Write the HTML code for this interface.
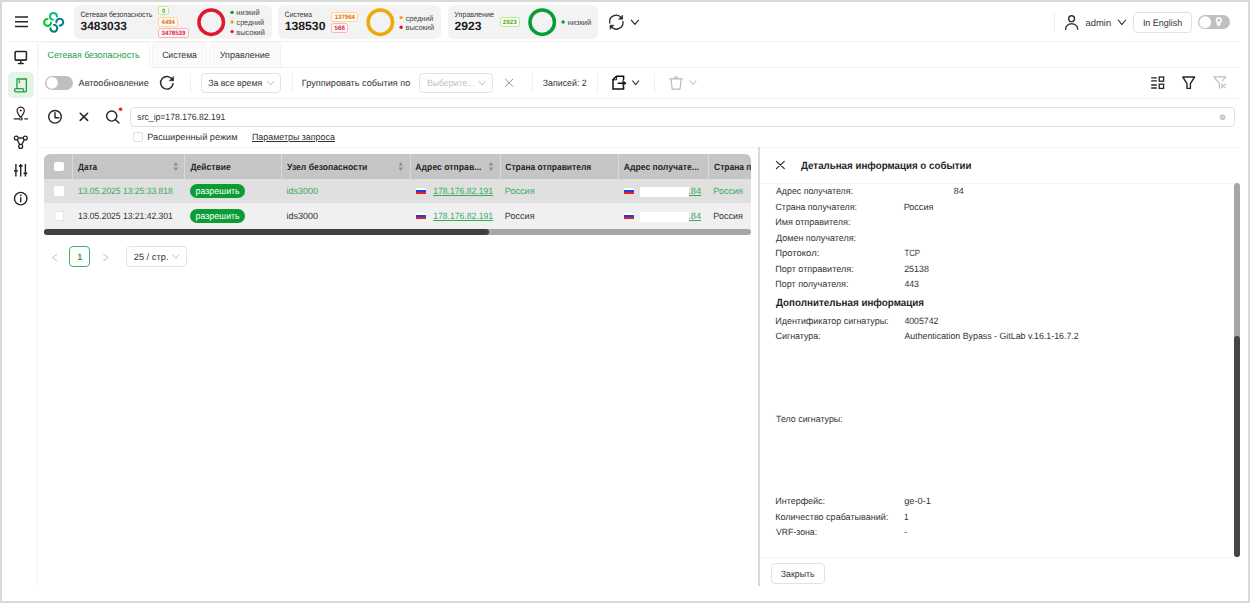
<!DOCTYPE html><html lang="ru"><head><meta charset="utf-8"><title>Сетевая безопасность</title><style>
*{box-sizing:border-box;margin:0;padding:0}
html,body{width:1250px;height:603px;overflow:hidden;background:#fff}
body{font-family:"Liberation Sans",sans-serif}
#app{position:absolute;left:0;top:0;width:1250px;height:603px;background:#fff;overflow:hidden}
#app>*{position:absolute}
header,nav,section,aside{left:0;top:0;width:0;height:0}
.t{position:absolute;left:0;top:0;white-space:nowrap;line-height:14px;height:14px;transform-origin:0 0;text-rendering:geometricPrecision}
.b{position:absolute}
.hl{position:absolute;height:1px;background:#f0f0f0}
.vl{position:absolute;width:1px;background:#f2f2f2}
.card{position:absolute;background:#f3f3f3;border-radius:6px}
.bd{position:absolute;border:1px solid;border-radius:2.5px}
.bd.g{border-color:#b7eb8f;background:#fbfff7}
.bd.o{border-color:#ffd591;background:#fffbf2}
.bd.r{border-color:#ffb3b0;background:#fff8f8}
.sel{position:absolute;border:1px solid #e2e2e2;border-radius:4px;background:#fff}
.tab{position:absolute;border:1px solid #f3f3f3;border-bottom:none;border-radius:5px 5px 0 0;background:#fafafa}
.tab.a{background:#fff}
.cb{position:absolute;border:1px solid #e0e0e0;border-radius:2px;background:#fff}
svg{position:absolute;overflow:visible}

</style></head><body><div id="app">
<header>
<div class="card" style="left:73.6px;top:5px;width:198.00px;height:34.00px;"></div>
<div class="card" style="left:278px;top:5px;width:163.40px;height:34.00px;"></div>
<div class="card" style="left:448px;top:5px;width:150.40px;height:34.00px;"></div>
<span class="t" style="font-size:7.8px;font-weight:400;color:#333;transform:translate(80.38px,8.10px) scaleX(0.8842);">Сетевая безопасность</span>
<span class="t" style="font-size:11.9px;font-weight:700;color:#1a1a1a;transform:translate(80.55px,19.40px) scaleX(1.0011);">3483033</span>
<div class="bd g" style="left:158.2px;top:6.4px;width:10.60px;height:9.00px;"></div>
<span class="t" style="font-size:6.3px;font-weight:700;color:#52a81c;transform:translate(161.97px,5.00px) scaleX(0.9333);">0</span>
<div class="bd o" style="left:158.2px;top:17.4px;width:20.00px;height:9.40px;"></div>
<span class="t" style="font-size:6.3px;font-weight:700;color:#d4760f;transform:translate(161.60px,16.00px) scaleX(0.9429);">4494</span>
<div class="bd r" style="left:158.2px;top:28.4px;width:30.60px;height:9.40px;"></div>
<span class="t" style="font-size:6.3px;font-weight:700;color:#d9263a;transform:translate(161.60px,27.00px) scaleX(0.9714);">3478539</span>
<span class="t" style="font-size:7.8px;font-weight:400;color:#444;transform:translate(236.32px,6.30px) scaleX(0.9617);">низкий</span>
<span class="t" style="font-size:7.8px;font-weight:400;color:#444;transform:translate(236.57px,15.90px) scaleX(0.9162);">средний</span>
<span class="t" style="font-size:7.8px;font-weight:400;color:#444;transform:translate(236.33px,25.50px) scaleX(0.9436);">высокий</span>
<span class="t" style="font-size:7.8px;font-weight:400;color:#333;transform:translate(284.78px,8.10px) scaleX(0.8640);">Система</span>
<span class="t" style="font-size:11.9px;font-weight:700;color:#1a1a1a;transform:translate(284.63px,19.40px) scaleX(1.0286);">138530</span>
<div class="bd o" style="left:331.4px;top:12px;width:26.40px;height:9.60px;"></div>
<span class="t" style="font-size:6.3px;font-weight:700;color:#d4760f;transform:translate(334.76px,11.00px) scaleX(0.9542);">137964</span>
<div class="bd r" style="left:331.4px;top:23px;width:16.80px;height:9.60px;"></div>
<span class="t" style="font-size:6.3px;font-weight:700;color:#d9263a;transform:translate(334.55px,22.00px) scaleX(0.9951);">566</span>
<span class="t" style="font-size:7.8px;font-weight:400;color:#444;transform:translate(405.77px,11.50px) scaleX(0.9162);">средний</span>
<span class="t" style="font-size:7.8px;font-weight:400;color:#444;transform:translate(405.53px,21.10px) scaleX(0.9436);">высокий</span>
<span class="t" style="font-size:7.8px;font-weight:400;color:#333;transform:translate(454.37px,8.10px) scaleX(0.9123);">Управление</span>
<span class="t" style="font-size:11.9px;font-weight:700;color:#1a1a1a;transform:translate(454.55px,19.40px) scaleX(1.0175);">2923</span>
<div class="bd g" style="left:499.6px;top:17.3px;width:20.40px;height:9.50px;"></div>
<span class="t" style="font-size:6.3px;font-weight:700;color:#52a81c;transform:translate(502.75px,16.00px) scaleX(0.9891);">2923</span>
<span class="t" style="font-size:7.8px;font-weight:400;color:#444;transform:translate(567.51px,15.90px) scaleX(0.9787);">низкий</span>
<div class="vl" style="left:1054px;top:12px;height:20px;background:#f0f0f0"></div>
<span class="t" style="font-size:9.3px;font-weight:400;color:#333;transform:translate(1085.55px,16.10px) scaleX(1.0122);">admin</span>
<div class="sel" style="left:1133.4px;top:12px;width:58.60px;height:20.60px;"></div>
<span class="t" style="font-size:9.3px;font-weight:400;color:#333;transform:translate(1142.88px,16.00px) scaleX(0.9620);">In English</span>
<div class="b" style="left:1198.2px;top:15px;width:31.80px;height:14.40px;background:#c0c0c0;border-radius:8px"></div>
</header>
<div class="hl" style="left:7px;top:41px;width:1233px;background:#f0f0f0"></div>
<nav>
<div class="b" style="left:8.2px;top:72.3px;width:26.10px;height:25.90px;background:#e4f5e8;border-radius:5px"></div>
<div class="vl" style="left:37px;top:42px;height:544px;background:#f5f5f5"></div>
</nav>
<div class="tab a" style="left:38px;top:42.4px;width:112.00px;height:25.60px;"></div>
<div class="tab" style="left:152px;top:42.4px;width:55.00px;height:24.60px;"></div>
<div class="tab" style="left:209px;top:42.4px;width:71.60px;height:24.60px;"></div>
<div class="hl" style="left:150px;top:67px;width:1090px;background:#f0f0f0"></div>
<span class="t" style="font-size:9.1px;font-weight:400;color:#1f9d45;transform:translate(47.51px,48.00px) scaleX(0.9723);">Сетевая безопасность</span>
<span class="t" style="font-size:9.1px;font-weight:400;color:#333;transform:translate(162.13px,48.00px) scaleX(0.9490);">Система</span>
<span class="t" style="font-size:9.1px;font-weight:400;color:#333;transform:translate(219.75px,48.00px) scaleX(0.9900);">Управление</span>
<div class="b" style="left:45.1px;top:75.9px;width:28.20px;height:13.90px;background:#bfbfbf;border-radius:7px"></div>
<span class="t" style="font-size:9.1px;font-weight:400;color:#333;transform:translate(78.60px,76.00px) scaleX(0.9971);">Автообновление</span>
<div class="vl" style="left:190px;top:73px;height:20px;background:#f0f0f0"></div>
<div class="sel" style="left:201px;top:72.5px;width:80.40px;height:20.40px;"></div>
<span class="t" style="font-size:9.1px;font-weight:400;color:#333;transform:translate(208.16px,76.00px) scaleX(0.9629);">За все время</span>
<div class="vl" style="left:292px;top:73px;height:20px;background:#f0f0f0"></div>
<span class="t" style="font-size:9.1px;font-weight:400;color:#333;transform:translate(301.85px,76.00px) scaleX(1.0037);">Группировать события по</span>
<div class="sel" style="left:419.4px;top:72.5px;width:73.20px;height:20.70px;"></div>
<span class="t" style="font-size:9.1px;font-weight:400;color:#bfbfbf;transform:translate(426.88px,76.00px) scaleX(0.9583);">Выберите...</span>
<div class="vl" style="left:532px;top:73px;height:20px;background:#f0f0f0"></div>
<span class="t" style="font-size:9.1px;font-weight:400;color:#333;transform:translate(542.76px,76.00px) scaleX(0.9698);">Записей: 2</span>
<div class="vl" style="left:596.6px;top:73px;height:20px;background:#f0f0f0"></div>
<div class="vl" style="left:653.6px;top:73px;height:20px;background:#f0f0f0"></div>
<div class="hl" style="left:38px;top:98px;width:1202px;background:#f0f0f0"></div>
<div class="sel" style="left:130px;top:107px;width:1105.00px;height:20.40px;"></div>
<span class="t" style="font-size:9.1px;font-weight:400;color:#333;transform:translate(137.36px,110.00px) scaleX(0.9474);">src_ip=178.176.82.191</span>
<div class="cb" style="left:133px;top:132px;width:10.00px;height:10.00px;"></div>
<span class="t" style="font-size:9.1px;font-weight:400;color:#333;transform:translate(147.24px,130.00px) scaleX(1.0085);">Расширенный режим</span>
<span class="t" style="font-size:9.1px;font-weight:400;color:#333;transform:translate(251.97px,130.00px) scaleX(0.9769);text-decoration:underline">Параметры запроса</span>
<div class="hl" style="left:38px;top:146.6px;width:1202px;background:#f5f5f5"></div>
<section>
<div class="b" style="left:44.4px;top:154px;width:706.60px;height:24.70px;background:#c5c5c5;border-radius:6px 6px 0 0"></div>
<div class="b" style="left:44.4px;top:178.7px;width:706.60px;height:24.30px;background:#e0e0e0"></div>
<div class="b" style="left:44.4px;top:203px;width:706.60px;height:25.80px;background:#f0f0f0"></div>
<div class="b" style="left:44.4px;top:228.8px;width:706.60px;height:6.40px;background:#a6a6a6;border-radius:3.2px"></div>
<div class="b" style="left:44.4px;top:228.8px;width:445.00px;height:6.40px;background:#404040;border-radius:3.2px"></div>
<div class="vl" style="left:72px;top:154px;height:24.69999999999999px;background:#d9d9d9"></div>
<div class="vl" style="left:184.4px;top:154px;height:24.69999999999999px;background:#d9d9d9"></div>
<div class="vl" style="left:281.4px;top:154px;height:24.69999999999999px;background:#d9d9d9"></div>
<div class="vl" style="left:410px;top:154px;height:24.69999999999999px;background:#d9d9d9"></div>
<div class="vl" style="left:500px;top:154px;height:24.69999999999999px;background:#d9d9d9"></div>
<div class="vl" style="left:618.4px;top:154px;height:24.69999999999999px;background:#d9d9d9"></div>
<div class="vl" style="left:708.4px;top:154px;height:24.69999999999999px;background:#d9d9d9"></div>
<div class="b" style="left:53.6px;top:161.6px;width:10.40px;height:9.80px;background:#fff;border-radius:2px"></div>
<div class="b" style="left:54px;top:186px;width:9.60px;height:9.60px;background:#fff;border-radius:2px"></div>
<div class="b" style="left:54px;top:211px;width:9.60px;height:9.60px;background:#fff;border-radius:2px;border:1px solid #e6e6e6"></div>
<span class="t" style="font-size:9.1px;font-weight:700;color:#262626;transform:translate(78.00px,159.90px) scaleX(0.9129);">Дата</span>
<span class="t" style="font-size:9.1px;font-weight:700;color:#262626;transform:translate(190.40px,159.90px) scaleX(0.9357);">Действие</span>
<span class="t" style="font-size:9.1px;font-weight:700;color:#262626;transform:translate(287.00px,159.90px) scaleX(0.9440);">Узел безопасности</span>
<span class="t" style="font-size:9.1px;font-weight:700;color:#262626;transform:translate(415.36px,159.90px) scaleX(0.9513);">Адрес отправ...</span>
<span class="t" style="font-size:9.1px;font-weight:700;color:#262626;transform:translate(505.37px,159.90px) scaleX(0.9290);">Страна отправителя</span>
<span class="t" style="font-size:9.1px;font-weight:700;color:#262626;transform:translate(623.76px,159.90px) scaleX(0.9473);">Адрес получате...</span>
<div class="b" style="left:708px;top:154px;width:43px;height:25px;overflow:hidden">
<span class="t" style="font-size:9.1px;font-weight:700;color:#262626;transform:translate(6.07px,5.90px) scaleX(0.9306);">Страна получателя</span>
</div>
<span class="t" style="font-size:9.1px;font-weight:400;color:#38ab5e;transform:translate(77.93px,184.00px) scaleX(0.9377);">13.05.2025 13:25:33.818</span>
<div class="b" style="left:190.4px;top:184.4px;width:54.60px;height:13.60px;background:#0a9d34;border-radius:7px"></div>
<span class="t" style="font-size:9.1px;font-weight:400;color:#fff;transform:translate(195.52px,184.20px) scaleX(0.9698);">разрешить</span>
<span class="t" style="font-size:9.1px;font-weight:400;color:#38ab5e;transform:translate(286.50px,184.00px) scaleX(0.9920);">ids3000</span>
<div class="b" style="left:415.5px;top:187.6px;width:10.70px;height:2.30px;background:#fff"></div>
<div class="b" style="left:415.5px;top:189.9px;width:10.70px;height:2.30px;background:#1f3fd8"></div>
<div class="b" style="left:415.5px;top:192.2px;width:10.70px;height:2.20px;background:#e0202a"></div>
<div class="b" style="left:623.8px;top:187.6px;width:10.70px;height:2.30px;background:#fff"></div>
<div class="b" style="left:623.8px;top:189.9px;width:10.70px;height:2.30px;background:#1f3fd8"></div>
<div class="b" style="left:623.8px;top:192.2px;width:10.70px;height:2.20px;background:#e0202a"></div>
<span class="t" style="font-size:9.1px;font-weight:400;color:#38ab5e;transform:translate(433.13px,184.00px) scaleX(0.9478);text-decoration:underline">178.176.82.191</span>
<span class="t" style="font-size:9.1px;font-weight:400;color:#38ab5e;transform:translate(504.85px,184.00px) scaleX(0.9965);">Россия</span>
<span class="t" style="font-size:9.1px;font-weight:400;color:#38ab5e;transform:translate(688.23px,184.00px) scaleX(1.0213);text-decoration:underline">.84</span>
<div class="b" style="left:640px;top:187px;width:48.60px;height:10.40px;background:#fff"></div>
<span class="t" style="font-size:9.1px;font-weight:400;color:#38ab5e;transform:translate(713.25px,184.00px) scaleX(0.9965);">Россия</span>
<span class="t" style="font-size:9.1px;font-weight:400;color:#333;transform:translate(77.93px,209.00px) scaleX(0.9377);">13.05.2025 13:21:42.301</span>
<div class="b" style="left:190.4px;top:209.4px;width:54.60px;height:13.60px;background:#0a9d34;border-radius:7px"></div>
<span class="t" style="font-size:9.1px;font-weight:400;color:#fff;transform:translate(195.52px,209.20px) scaleX(0.9698);">разрешить</span>
<span class="t" style="font-size:9.1px;font-weight:400;color:#333;transform:translate(286.50px,209.00px) scaleX(0.9920);">ids3000</span>
<div class="b" style="left:415.5px;top:212.6px;width:10.70px;height:2.30px;background:#fff"></div>
<div class="b" style="left:415.5px;top:214.9px;width:10.70px;height:2.30px;background:#1f3fd8"></div>
<div class="b" style="left:415.5px;top:217.2px;width:10.70px;height:2.20px;background:#e0202a"></div>
<div class="b" style="left:623.8px;top:212.6px;width:10.70px;height:2.30px;background:#fff"></div>
<div class="b" style="left:623.8px;top:214.9px;width:10.70px;height:2.30px;background:#1f3fd8"></div>
<div class="b" style="left:623.8px;top:217.2px;width:10.70px;height:2.20px;background:#e0202a"></div>
<span class="t" style="font-size:9.1px;font-weight:400;color:#38ab5e;transform:translate(433.13px,209.00px) scaleX(0.9478);text-decoration:underline">178.176.82.191</span>
<span class="t" style="font-size:9.1px;font-weight:400;color:#333;transform:translate(504.85px,209.00px) scaleX(0.9965);">Россия</span>
<span class="t" style="font-size:9.1px;font-weight:400;color:#38ab5e;transform:translate(688.23px,209.00px) scaleX(1.0213);text-decoration:underline">.84</span>
<div class="b" style="left:640px;top:212px;width:48.60px;height:10.40px;background:#fff"></div>
<span class="t" style="font-size:9.1px;font-weight:400;color:#333;transform:translate(713.25px,209.00px) scaleX(0.9965);">Россия</span>
</section>
<div class="sel" style="left:69px;top:246px;width:21.00px;height:20.60px;border-color:#3fb068"></div>
<span class="t" style="font-size:9.1px;font-weight:700;color:#1f9d45;transform:translate(77.55px,249.90px) scaleX(0.9000);">1</span>
<div class="sel" style="left:126px;top:246px;width:60.60px;height:20.60px;"></div>
<span class="t" style="font-size:9.1px;font-weight:400;color:#333;transform:translate(133.75px,249.90px) scaleX(1.0182);">25 / стр.</span>
<aside>
<div class="b" style="left:758px;top:147px;width:2.00px;height:439.00px;background:#d9d9d9"></div>
<span class="t" style="font-size:10.4px;font-weight:700;color:#1f1f1f;transform:translate(801.00px,160.00px) scaleX(0.9379);">Детальная информация о событии</span>
<div class="hl" style="left:760px;top:183px;width:474px;background:#f3f3f3"></div>
<span class="t" style="font-size:9.1px;font-weight:400;color:#333;transform:translate(776.00px,184.20px) scaleX(0.9682);">Адрес получателя:</span>
<span class="t" style="font-size:9.1px;font-weight:400;color:#333;transform:translate(775.52px,199.60px) scaleX(0.9663);">Страна получателя:</span>
<span class="t" style="font-size:9.1px;font-weight:400;color:#333;transform:translate(903.65px,199.60px) scaleX(0.9965);">Россия</span>
<span class="t" style="font-size:9.1px;font-weight:400;color:#333;transform:translate(775.26px,215.00px) scaleX(0.9912);">Имя отправителя:</span>
<span class="t" style="font-size:9.1px;font-weight:400;color:#333;transform:translate(776.00px,230.60px) scaleX(0.9894);">Домен получателя:</span>
<span class="t" style="font-size:9.1px;font-weight:400;color:#333;transform:translate(775.22px,246.00px) scaleX(1.0405);">Протокол:</span>
<span class="t" style="font-size:9.1px;font-weight:400;color:#333;transform:translate(904.40px,246.00px) scaleX(0.8563);">TCP</span>
<span class="t" style="font-size:9.1px;font-weight:400;color:#333;transform:translate(775.25px,261.80px) scaleX(0.9968);">Порт отправителя:</span>
<span class="t" style="font-size:9.1px;font-weight:400;color:#333;transform:translate(904.16px,261.80px) scaleX(0.9778);">25138</span>
<span class="t" style="font-size:9.1px;font-weight:400;color:#333;transform:translate(775.26px,277.40px) scaleX(0.9903);">Порт получателя:</span>
<span class="t" style="font-size:9.1px;font-weight:400;color:#333;transform:translate(904.40px,277.40px) scaleX(0.9600);">443</span>
<span class="t" style="font-size:9.1px;font-weight:400;color:#333;transform:translate(775.26px,313.60px) scaleX(0.9846);">Идентификатор сигнатуры:</span>
<span class="t" style="font-size:9.1px;font-weight:400;color:#333;transform:translate(904.40px,313.60px) scaleX(0.9600);">4005742</span>
<span class="t" style="font-size:9.1px;font-weight:400;color:#333;transform:translate(775.51px,329.00px) scaleX(0.9778);">Сигнатура:</span>
<span class="t" style="font-size:9.1px;font-weight:400;color:#333;transform:translate(904.40px,329.00px) scaleX(0.9694);">Authentication Bypass - GitLab v.16.1-16.7.2</span>
<span class="t" style="font-size:9.1px;font-weight:400;color:#333;transform:translate(776.00px,411.60px) scaleX(0.9742);">Тело сигнатуры:</span>
<span class="t" style="font-size:9.1px;font-weight:400;color:#333;transform:translate(775.26px,494.00px) scaleX(0.9878);">Интерфейс:</span>
<span class="t" style="font-size:9.1px;font-weight:400;color:#333;transform:translate(904.15px,494.00px) scaleX(1.0175);">ge-0-1</span>
<span class="t" style="font-size:9.1px;font-weight:400;color:#333;transform:translate(775.26px,510.00px) scaleX(0.9902);">Количество срабатываний:</span>
<span class="t" style="font-size:9.1px;font-weight:400;color:#333;transform:translate(903.95px,510.00px) scaleX(0.9000);">1</span>
<span class="t" style="font-size:9.1px;font-weight:400;color:#333;transform:translate(776.00px,525.40px) scaleX(0.9562);">VRF-зона:</span>
<span class="t" style="font-size:9.1px;font-weight:400;color:#333;transform:translate(904.17px,525.40px) scaleX(0.9000);">-</span>
<span class="t" style="font-size:9.1px;font-weight:400;color:#333;transform:translate(953.75px,184.20px) scaleX(0.9846);">84</span>
<span class="t" style="font-size:10.4px;font-weight:700;color:#1f1f1f;transform:translate(776.00px,297.20px) scaleX(0.9449);">Дополнительная информация</span>
<div class="b" style="left:1234px;top:183px;width:6.00px;height:374.40px;background:#a6a6a6;border-radius:3px"></div>
<div class="b" style="left:1234px;top:336px;width:6.00px;height:221.40px;background:#454545;border-radius:3px"></div>
<div class="hl" style="left:760px;top:557px;width:474px;background:#f5f5f5"></div>
<div class="sel" style="left:771px;top:563.4px;width:54.40px;height:21.00px;"></div>
<span class="t" style="font-size:9.1px;font-weight:400;color:#333;transform:translate(780.76px,567.00px) scaleX(0.9681);">Закрыть</span>
</aside>
<svg class="b" style="left:0;top:0" width="1250" height="603" viewBox="0 0 1250 603" fill="none" stroke="#262626" stroke-width="1.3" stroke-linecap="round" stroke-linejoin="round">
<!-- hamburger -->
<g stroke-width="1.5" stroke-linecap="butt"><path d="M15 17.1H28M15 21.7H28M15 26.4H28"/></g>
<!-- logo -->
<g stroke-width="2.1">
<path d="M52.9 19.8A3.45 3.45 0 1 1 56.9 16.4" stroke="#14c07c"/>
<path d="M51 22.6A3.45 3.45 0 1 1 47.5 19" stroke="#06c23c"/>
<path d="M56.3 22.2A3.45 3.45 0 1 1 59.8 25.6" stroke="#0a7f94"/>
<path d="M54 24.8A3.45 3.45 0 1 1 50.4 28.4" stroke="#0a806c"/>
</g>
<!-- donuts -->
<g stroke-width="3.5">
<circle cx="211.2" cy="22.2" r="12.25" stroke="#e0182d"/>
<circle cx="380.3" cy="22.2" r="12.25" stroke="#efa80a"/>
<circle cx="542.2" cy="22.2" r="12.25" stroke="#0a9d34"/>
</g>
<!-- legend dots -->
<g stroke="none">
<circle cx="232.1" cy="12.4" r="1.7" fill="#0a9d34"/><circle cx="232.1" cy="22" r="1.7" fill="#f0a30a"/><circle cx="232.1" cy="31.6" r="1.7" fill="#e0182d"/>
<circle cx="401.1" cy="17.6" r="1.7" fill="#f0a30a"/><circle cx="401.1" cy="27.2" r="1.7" fill="#e0182d"/>
<circle cx="563.1" cy="22" r="1.7" fill="#0a9d34"/>
</g>
<!-- sync -->
<g>
<path d="M609.7 23A6.6 6.6 0 0 1 621.2 17.6"/>
<path d="M622.9 21.4A6.6 6.6 0 0 1 611.4 26.8"/>
<path d="M622.6 15.4V19.2H618.8Z" fill="#262626" stroke-width=".6"/>
<path d="M610 29V25.2H613.8Z" fill="#262626" stroke-width=".6"/>
<path d="M631.3 20.1L634.9 24.4L638.5 20.1" stroke-width="1.15"/>
</g>
<!-- user -->
<g stroke="#333">
<circle cx="1071.6" cy="18.7" r="2.9" stroke-width="1.45"/>
<path d="M1065.7 29.2V28.6A5.9 4.8 0 0 1 1077.6 28.6V29.2" stroke-width="1.4"/>
<path d="M1118.2 20L1121.9 24.6L1125.6 20" stroke-width="1.1"/>
</g>
<!-- toggle knobs -->
<circle cx="1205.2" cy="22.25" r="5.9" fill="#fff" stroke="none"/>
<circle cx="52.1" cy="82.85" r="5.8" fill="#fff" stroke="none"/>
<!-- bulb in toggle -->
<g stroke="#fff" fill="none">
<circle cx="1218.8" cy="20.3" r="2.4" stroke-width="1.5"/>
<path d="M1217.3 23.2H1220.3L1219.8 25.6H1217.8Z" fill="#fff" stroke-width=".6"/>
</g>
<!-- sidebar icons -->
<g>
<rect x="15.1" y="51.4" width="11.3" height="8.7" rx=".8" stroke-width="1.55"/>
<path d="M20.8 60.4V63.2M18.4 63.5H23.2" stroke-width="1.4"/>
</g>
<g stroke="#1a9f40">
<path d="M17 88.4V79H26.4V90.6A1.2 1.2 0 0 1 25.2 91.8H23.5"/>
<rect x="14.6" y="88.6" width="9" height="3.2" rx="1.4"/>
<path d="M19.4 80.8V82.6"/>
</g>
<g>
<path d="M20.7 117.6C18.4 114.6 17.1 112.6 17.1 110.8A3.6 3.6 0 0 1 24.3 110.8C24.3 112.6 23 114.6 20.7 117.6Z" stroke-width="1.2"/>
<circle cx="20.7" cy="110.5" r=".75" fill="#262626" stroke-width=".5"/>
<path d="M14.2 118.8H22M24.8 118.8H27.6"/>
<circle cx="20.8" cy="118.8" r="1.3" stroke-width="1" fill="#fff"/>
</g>
<g>
<circle cx="16.3" cy="138" r="1.95"/>
<circle cx="25.3" cy="138" r="1.95"/>
<circle cx="20.7" cy="146.4" r="1.95"/>
<path d="M19.2 138H22.4M17.4 140L19.6 144.4M24.2 140L21.9 144.4"/>
</g>
<g stroke-width="1.4" stroke-linecap="butt">
<path d="M15.9 164V176.4M20.7 164V176.4M25.4 164V176.4"/>
<path d="M14.1 170.9H17.7M18.9 165.9H22.5M23.6 173.4H27.2" stroke-width="1.9"/>
</g>
<g>
<circle cx="20.7" cy="198.6" r="6.25" stroke-width="1.45"/>
<path d="M20.7 197.6V201.8" stroke-width="1.4"/>
<circle cx="20.7" cy="195.2" r=".5" fill="#262626" stroke-width=".6"/>
</g>
<!-- toolbar: refresh -->
<g stroke-width="1.45">
<path d="M172.6 80.2A6.3 6.3 0 1 0 173.1 83.6"/>
<path d="M173.6 76.6V80.8H169.4Z" fill="#262626" stroke-width=".5"/>
</g>
<!-- select arrows -->
<g stroke="#bfbfbf" stroke-width="1">
<path d="M267.6 81.4L270.7 85L273.8 81.4"/>
<path d="M479 81.4L482.1 85L485.2 81.4"/>
<path d="M172.6 254.8L175.7 258.4L178.8 254.8"/>
<path d="M689.8 80.6L692.9 84.6L696 80.6"/>
</g>
<!-- group clear X -->
<path d="M505.5 79.2L512.7 86.4M512.7 79.2L505.5 86.4" stroke="#8c8c8c" stroke-width="1"/>
<!-- export -->
<g stroke="#111" stroke-width="1.5" stroke-linejoin="miter">
<path d="M623.6 79.4V76.2H616.4L613 79.6V89H623.6V86.6"/>
<path d="M616.6 76.4V79.8H613.2" stroke-width="1"/>
<path d="M618.2 83.2H625.4"/>
<path d="M623 80.4L626 83.2L623 86Z" fill="#262626" stroke-width=".6"/>
<path d="M632.7 80.8L635.7 84.6L638.7 80.8" stroke="#333" stroke-width="1.05"/>
</g>
<!-- trash -->
<g stroke="#b8b8b8" stroke-width="1.2">
<path d="M669.8 78.8H682.4M674.6 78.6A1.6 2 0 0 1 677.8 78.6M671.2 80.2L672.2 89.2H680L681 80.2"/>
</g>
<!-- right tools -->
<g stroke-linecap="butt" stroke-linejoin="miter">
<path d="M1151.2 77.8H1156.8M1151.2 80.8H1156.8M1151.2 85H1156.8M1151.2 88H1156.8"/>
<rect x="1159.2" y="77" width="4.4" height="4.2"/>
<rect x="1159.2" y="84.2" width="4.4" height="4.2"/>
</g>
<path d="M1182.8 77H1194.6L1190.4 83.6V88.4H1187V83.6Z" stroke-width="1.4"/>
<g stroke="#bdbdbd" stroke-width="1.2">
<path d="M1219.4 88V83.4L1213.8 76.8H1225.6L1222.4 81"/>
<path d="M1221.4 84.2L1225.2 87.8M1225.2 84.2L1221.4 87.8"/>
</g>
<!-- search row -->
<g stroke-width="1.45">
<circle cx="55" cy="116.8" r="6.3"/>
<path d="M55 112.6V117.8H58.8"/>
<path d="M80.2 113.2L87.6 120.4M87.6 113.2L80.2 120.4" stroke-width="1.55"/>
<circle cx="111.7" cy="116" r="5.1"/>
<path d="M115.5 119.8L119 123" stroke-width="1.4"/>
<circle cx="120.6" cy="109.3" r="1.8" fill="#f5222d" stroke="none"/>
</g>
<circle cx="1222.6" cy="117.2" r="2.7" fill="#bfbfbf" stroke="none"/>
<path d="M1221.6 116.2L1223.6 118.2M1223.6 116.2L1221.6 118.2" stroke="#fff" stroke-width=".6"/>
<!-- sort icons -->
<g fill="#8c8c8c" stroke="none">
<path d="M173.6 165.6L175.8 162L178 165.6ZM173.6 167.4L175.8 171L178 167.4Z"/>
<path d="M398.6 165.6L400.8 162L403 165.6ZM398.6 167.4L400.8 171L403 167.4Z"/>
<path d="M488.8 165.6L491 162L493.2 165.6ZM488.8 167.4L491 171L493.2 167.4Z"/>
</g>
<!-- pagination arrows -->
<g stroke="#bfbfbf" stroke-width="1">
<path d="M56.8 254.4L52.2 257.6L56.8 260.8"/>
<path d="M103.6 254.4L108.2 257.6L103.6 260.8"/>
</g>
<!-- panel close -->
<path d="M776.4 161.3L784.3 168.7M784.3 161.3L776.4 168.7" stroke-width="1.15"/>
</svg>

<div class="b" style="left:0;top:0;width:1250px;height:603px;border:2px solid #d9d9d9;pointer-events:none"></div>
</div></body></html>
